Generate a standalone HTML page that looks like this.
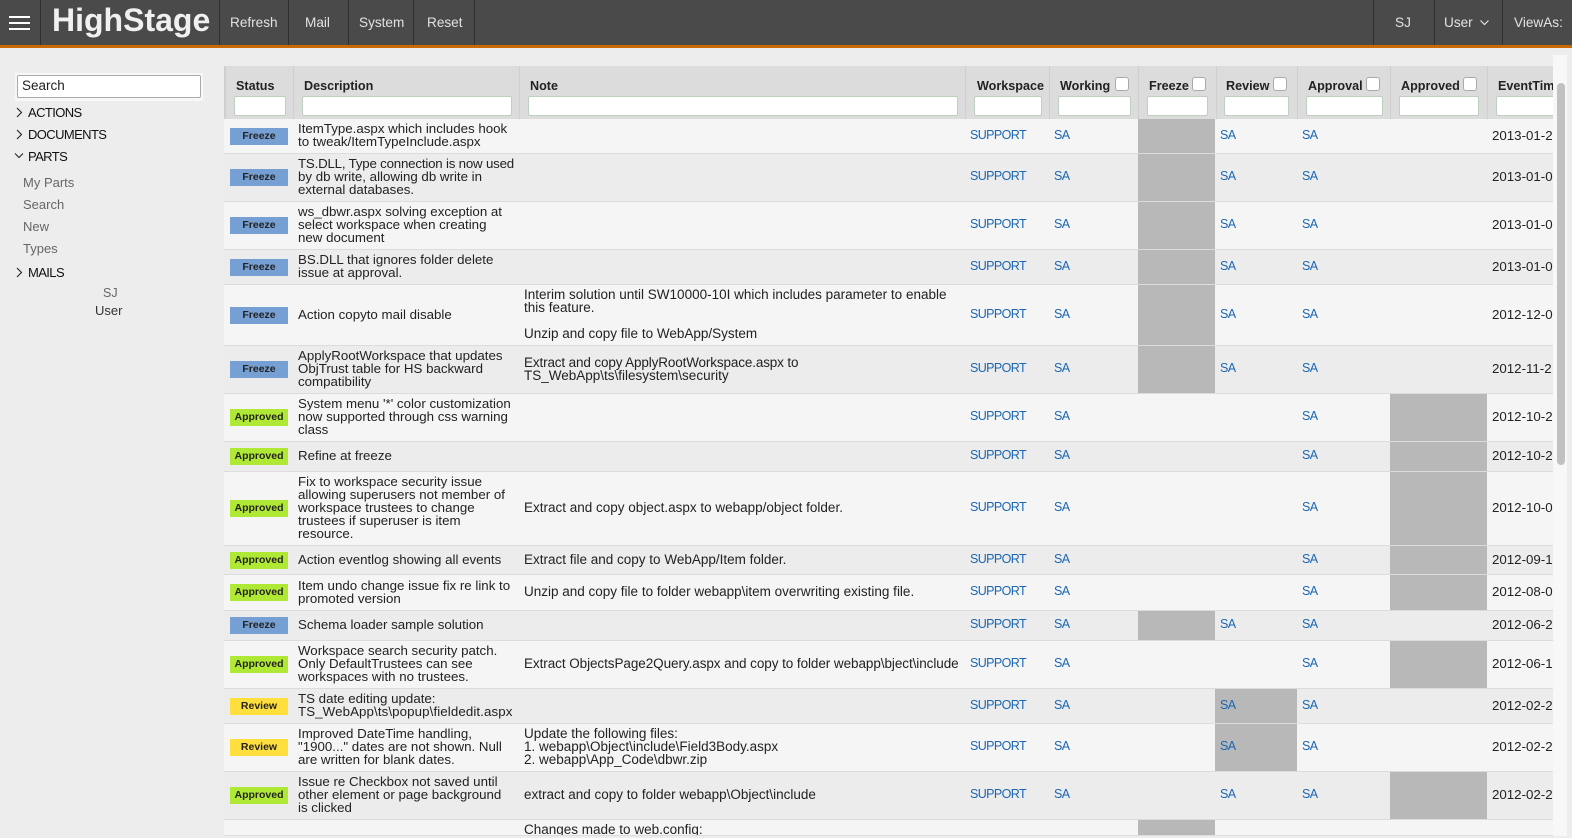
<!DOCTYPE html>
<html><head><meta charset="utf-8"><title>HighStage</title>
<style>
html,body{margin:0;padding:0;height:838px;overflow:hidden}
body{width:1572px;background:#ededed;position:relative;font-family:"Liberation Sans",sans-serif;color:#222}
.a{position:absolute;white-space:nowrap}
#nav{position:absolute;left:0;top:0;width:1572px;height:45px;background:#4a4a4a;border-bottom:3px solid #c96a00}
.sep{position:absolute;top:0;width:1px;height:45px;background:#2f2f2f}
.nt{position:absolute;top:15px;line-height:16px;font-size:13.6px;color:#e2e2e2;white-space:nowrap}
.bar{position:absolute;left:9px;width:21px;height:2px;background:#fff}
.m{font-size:13px;letter-spacing:-.6px;line-height:16px;color:#111;left:28px}
.s{font-size:13px;line-height:16px;color:#666;left:23px}
#th{position:absolute;left:224px;top:66px;width:1329px;height:53px;background:#dcdcdc;overflow:hidden}
.h{position:absolute;top:12px;font-size:12.6px;line-height:16px;font-weight:bold;color:#222;white-space:nowrap}
.v{position:absolute;top:0;width:1px;height:53px;background:#cfcfcf}
.i{position:absolute;top:30px;height:18px;background:#fff;border:1px solid #bfd0bf;border-radius:2px}
.c{position:absolute;top:11px;width:12px;height:12px;background:#fff;border:1px solid #aaa;border-radius:3px}
#tb{position:absolute;left:224px;top:119px;width:1329px;height:717px;overflow:hidden;border-bottom:1px solid #ddd;box-sizing:border-box}
table{border-collapse:separate;border-spacing:0;table-layout:fixed;width:1329px}
td{padding:0 0 2px 0;font-size:13.3px;line-height:13px;vertical-align:middle;white-space:nowrap;border-bottom:1px solid #dcdcdc;box-sizing:border-box;overflow:hidden;color:#222}
tr:nth-child(odd) td{background:#f5f5f5}
tr:nth-child(even) td{background:#ececec}
td.d{padding-left:4px}
td:nth-child(2).d,td:last-child.d{padding-left:5px}
td:nth-child(3).d{font-size:13.5px}
td.l{padding-left:5px;color:#1a66b3;font-size:12.5px;letter-spacing:-.6px}
tr td.g{background:#b8b8b8}
tr.e td{border-bottom:0;padding:0;height:15px}
tr.e td.d{padding:4px 0 0 4px;line-height:11px;vertical-align:top}
.b{display:block;position:relative;top:1px;margin-left:6px;width:58px;height:17px;line-height:17px;text-align:center;font-size:10.5px;font-weight:bold;color:#222}
.fz{background:#769fd3}.ap{background:#b0e836}.rv{background:#ffdf3d}
#tr{position:absolute;left:1553px;top:55px;width:14px;height:781px;background:#f8f8f8}
#tm{position:absolute;left:1557px;top:83px;width:8px;height:382px;background:#c1c1c1;border-radius:4px}
</style></head><body>
<div id="nav">
<div class="bar" style="top:16px"></div><div class="bar" style="top:22px"></div><div class="bar" style="top:28px"></div>
<div class="sep" style="left:40px"></div><div class="sep" style="left:219px"></div><div class="sep" style="left:288px"></div><div class="sep" style="left:348px"></div><div class="sep" style="left:413px"></div><div class="sep" style="left:474px"></div><div class="sep" style="left:1373px"></div><div class="sep" style="left:1434px"></div><div class="sep" style="left:1502px"></div>
<div class="a" style="left:52px;top:0;font-size:32px;line-height:40px;font-weight:bold;color:#f0f0f0">HighStage</div>
<div class="nt" style="left:230px">Refresh</div><div class="nt" style="left:305px">Mail</div><div class="nt" style="left:359px">System</div><div class="nt" style="left:427px">Reset</div><div class="nt" style="left:1395px">SJ</div><div class="nt" style="left:1444px">User</div><div class="nt" style="left:1514px">ViewAs:</div>
<svg class="a" style="left:1479px;top:19px" width="11" height="8" viewBox="0 0 11 8"><path d="M1.5 1.5 L5.5 5.5 L9.5 1.5" fill="none" stroke="#e2e2e2" stroke-width="1.2"/></svg>
</div>

<div class="a" style="left:15px;top:73px;width:188px;height:28px;background:#f7f7f7"></div>
<div class="a" style="left:17px;top:75px;width:182px;height:21px;background:#fff;border:1px solid #aaa;border-radius:2px;font-size:13.5px;line-height:19px;color:#222;text-indent:4px">Search</div>
<svg class="a" style="left:15px;top:107px" width="8" height="11" viewBox="0 0 8 11"><path d="M2 1 L6.5 5.5 L2 10" fill="none" stroke="#222" stroke-width="1.1"/></svg>
<svg class="a" style="left:15px;top:129px" width="8" height="11" viewBox="0 0 8 11"><path d="M2 1 L6.5 5.5 L2 10" fill="none" stroke="#222" stroke-width="1.1"/></svg>
<svg class="a" style="left:14px;top:152px" width="10" height="8" viewBox="0 0 10 8"><path d="M1 1.5 L5 5.5 L9 1.5" fill="none" stroke="#222" stroke-width="1.1"/></svg>
<svg class="a" style="left:15px;top:267px" width="8" height="11" viewBox="0 0 8 11"><path d="M2 1 L6.5 5.5 L2 10" fill="none" stroke="#222" stroke-width="1.1"/></svg>
<div class="a m" style="top:105px">ACTIONS</div>
<div class="a m" style="top:127px">DOCUMENTS</div>
<div class="a m" style="top:149px">PARTS</div>
<div class="a s" style="top:175px">My Parts</div>
<div class="a s" style="top:197px">Search</div>
<div class="a s" style="top:219px">New</div>
<div class="a s" style="top:241px">Types</div>
<div class="a m" style="top:265px">MAILS</div>
<div class="a" style="left:103px;top:285px;font-size:12.5px;line-height:16px;color:#666">SJ</div>
<div class="a" style="left:95px;top:303px;font-size:13px;line-height:16px;color:#333">User</div>

<div id="tr"></div><div id="tm"></div>

<div id="th">
<div class="v" style="left:0;width:2px"></div><div class="v" style="left:69px"></div><div class="v" style="left:295px"></div><div class="v" style="left:741px"></div><div class="v" style="left:825px"></div><div class="v" style="left:914px"></div><div class="v" style="left:992px"></div><div class="v" style="left:1073px"></div><div class="v" style="left:1166px"></div><div class="v" style="left:1263px"></div>
<div class="h" style="left:12px">Status</div><div class="h" style="left:80px">Description</div><div class="h" style="left:306px">Note</div><div class="h" style="left:753px">Workspace</div><div class="h" style="left:836px">Working</div><div class="h" style="left:925px">Freeze</div><div class="h" style="left:1002px">Review</div><div class="h" style="left:1084px">Approval</div><div class="h" style="left:1177px">Approved</div><div class="h" style="left:1274px">EventTime</div>
<div class="c" style="left:891px"></div><div class="c" style="left:968px"></div><div class="c" style="left:1049px"></div><div class="c" style="left:1142px"></div><div class="c" style="left:1239px"></div>
<div class="i" style="left:10px;width:50px"></div><div class="i" style="left:78px;width:208px"></div><div class="i" style="left:304px;width:428px"></div><div class="i" style="left:750px;width:66px"></div><div class="i" style="left:834px;width:71px"></div><div class="i" style="left:923px;width:59px"></div><div class="i" style="left:1000px;width:63px"></div><div class="i" style="left:1082px;width:75px"></div><div class="i" style="left:1175px;width:78px"></div><div class="i" style="left:1272px;width:80px"></div>
</div>

<div id="tb"><table>
<colgroup><col style="width:69px"><col style="width:227px"><col style="width:445px"><col style="width:84px"><col style="width:89px"><col style="width:77px"><col style="width:82px"><col style="width:93px"><col style="width:97px"><col style="width:66px"></colgroup>
<tr style="height:35px"><td><span class="b fz">Freeze</span></td><td class="d">ItemType.aspx which includes hook<br>to tweak/ItemTypeInclude.aspx</td><td class="d"></td><td class="l">SUPPORT</td><td class="l">SA</td><td class="g"></td><td class="l">SA</td><td class="l">SA</td><td></td><td class="d">2013-01-2</td></tr>
<tr style="height:48px"><td><span class="b fz">Freeze</span></td><td class="d"><span style="letter-spacing:-.2px">TS.DLL, Type connection is now used</span><br>by db write, allowing db write in<br>external databases.</td><td class="d"></td><td class="l">SUPPORT</td><td class="l">SA</td><td class="g"></td><td class="l">SA</td><td class="l">SA</td><td></td><td class="d">2013-01-0</td></tr>
<tr style="height:48px"><td><span class="b fz">Freeze</span></td><td class="d">ws_dbwr.aspx solving exception at<br>select workspace when creating<br>new document</td><td class="d"></td><td class="l">SUPPORT</td><td class="l">SA</td><td class="g"></td><td class="l">SA</td><td class="l">SA</td><td></td><td class="d">2013-01-0</td></tr>
<tr style="height:35px"><td><span class="b fz">Freeze</span></td><td class="d">BS.DLL that ignores folder delete<br>issue at approval.</td><td class="d"></td><td class="l">SUPPORT</td><td class="l">SA</td><td class="g"></td><td class="l">SA</td><td class="l">SA</td><td></td><td class="d">2013-01-0</td></tr>
<tr style="height:61px"><td><span class="b fz">Freeze</span></td><td class="d">Action copyto mail disable</td><td class="d">Interim solution until SW10000-10I which includes parameter to enable<br>this feature.<br><br>Unzip and copy file to WebApp/System</td><td class="l">SUPPORT</td><td class="l">SA</td><td class="g"></td><td class="l">SA</td><td class="l">SA</td><td></td><td class="d">2012-12-0</td></tr>
<tr style="height:48px"><td><span class="b fz">Freeze</span></td><td class="d">ApplyRootWorkspace that updates<br>ObjTrust table for HS backward<br>compatibility</td><td class="d"><span style="letter-spacing:-.14px">Extract and copy ApplyRootWorkspace.aspx to</span><br>TS_WebApp\ts\filesystem\security</td><td class="l">SUPPORT</td><td class="l">SA</td><td class="g"></td><td class="l">SA</td><td class="l">SA</td><td></td><td class="d">2012-11-2</td></tr>
<tr style="height:48px"><td><span class="b ap">Approved</span></td><td class="d">System menu '*' color customization<br>now supported through css warning<br>class</td><td class="d"></td><td class="l">SUPPORT</td><td class="l">SA</td><td></td><td></td><td class="l">SA</td><td class="g"></td><td class="d">2012-10-2</td></tr>
<tr style="height:30px"><td><span class="b ap">Approved</span></td><td class="d">Refine at freeze</td><td class="d"></td><td class="l">SUPPORT</td><td class="l">SA</td><td></td><td></td><td class="l">SA</td><td class="g"></td><td class="d">2012-10-2</td></tr>
<tr style="height:74px"><td><span class="b ap">Approved</span></td><td class="d">Fix to workspace security issue<br>allowing superusers not member of<br>workspace trustees to change<br>trustees if superuser is item<br>resource.</td><td class="d">Extract and copy object.aspx to webapp/object folder.</td><td class="l">SUPPORT</td><td class="l">SA</td><td></td><td></td><td class="l">SA</td><td class="g"></td><td class="d">2012-10-0</td></tr>
<tr style="height:29px"><td><span class="b ap">Approved</span></td><td class="d">Action eventlog showing all events</td><td class="d">Extract file and copy to WebApp/Item folder.</td><td class="l">SUPPORT</td><td class="l">SA</td><td></td><td></td><td class="l">SA</td><td class="g"></td><td class="d">2012-09-1</td></tr>
<tr style="height:36px"><td><span class="b ap">Approved</span></td><td class="d">Item undo change issue fix re link to<br>promoted version</td><td class="d">Unzip and copy file to folder webapp\item overwriting existing file.</td><td class="l">SUPPORT</td><td class="l">SA</td><td></td><td></td><td class="l">SA</td><td class="g"></td><td class="d">2012-08-0</td></tr>
<tr style="height:30px"><td><span class="b fz">Freeze</span></td><td class="d">Schema loader sample solution</td><td class="d"></td><td class="l">SUPPORT</td><td class="l">SA</td><td class="g"></td><td class="l">SA</td><td class="l">SA</td><td></td><td class="d">2012-06-2</td></tr>
<tr style="height:48px"><td><span class="b ap">Approved</span></td><td class="d">Workspace search security patch.<br>Only DefaultTrustees can see<br>workspaces with no trustees.</td><td class="d"><span style="letter-spacing:-.07px">Extract ObjectsPage2Query.aspx and copy to folder webapp\bject\include</span></td><td class="l">SUPPORT</td><td class="l">SA</td><td></td><td></td><td class="l">SA</td><td class="g"></td><td class="d">2012-06-1</td></tr>
<tr style="height:35px"><td><span class="b rv">Review</span></td><td class="d">TS date editing update:<br><span style="letter-spacing:.1px">TS_WebApp\ts\popup\fieldedit.aspx</span></td><td class="d"></td><td class="l">SUPPORT</td><td class="l">SA</td><td></td><td class="l g">SA</td><td class="l">SA</td><td></td><td class="d">2012-02-2</td></tr>
<tr style="height:48px"><td><span class="b rv">Review</span></td><td class="d">Improved DateTime handling,<br>"1900..." dates are not shown. Null<br>are written for blank dates.</td><td class="d">Update the following files:<br>1. webapp\Object\include\Field3Body.aspx<br>2. webapp\App_Code\dbwr.zip</td><td class="l">SUPPORT</td><td class="l">SA</td><td></td><td class="l g">SA</td><td class="l">SA</td><td></td><td class="d">2012-02-2</td></tr>
<tr style="height:48px"><td><span class="b ap">Approved</span></td><td class="d">Issue re Checkbox not saved until<br>other element or page background<br>is clicked</td><td class="d">extract and copy to folder webapp\Object\include</td><td class="l">SUPPORT</td><td class="l">SA</td><td></td><td class="l">SA</td><td class="l">SA</td><td class="g"></td><td class="d">2012-02-2</td></tr>
<tr class="e"><td></td><td></td><td class="d">Changes made to web.config:</td><td></td><td></td><td class="g"></td><td></td><td></td><td></td><td></td></tr>
</table></div>
</body></html>
